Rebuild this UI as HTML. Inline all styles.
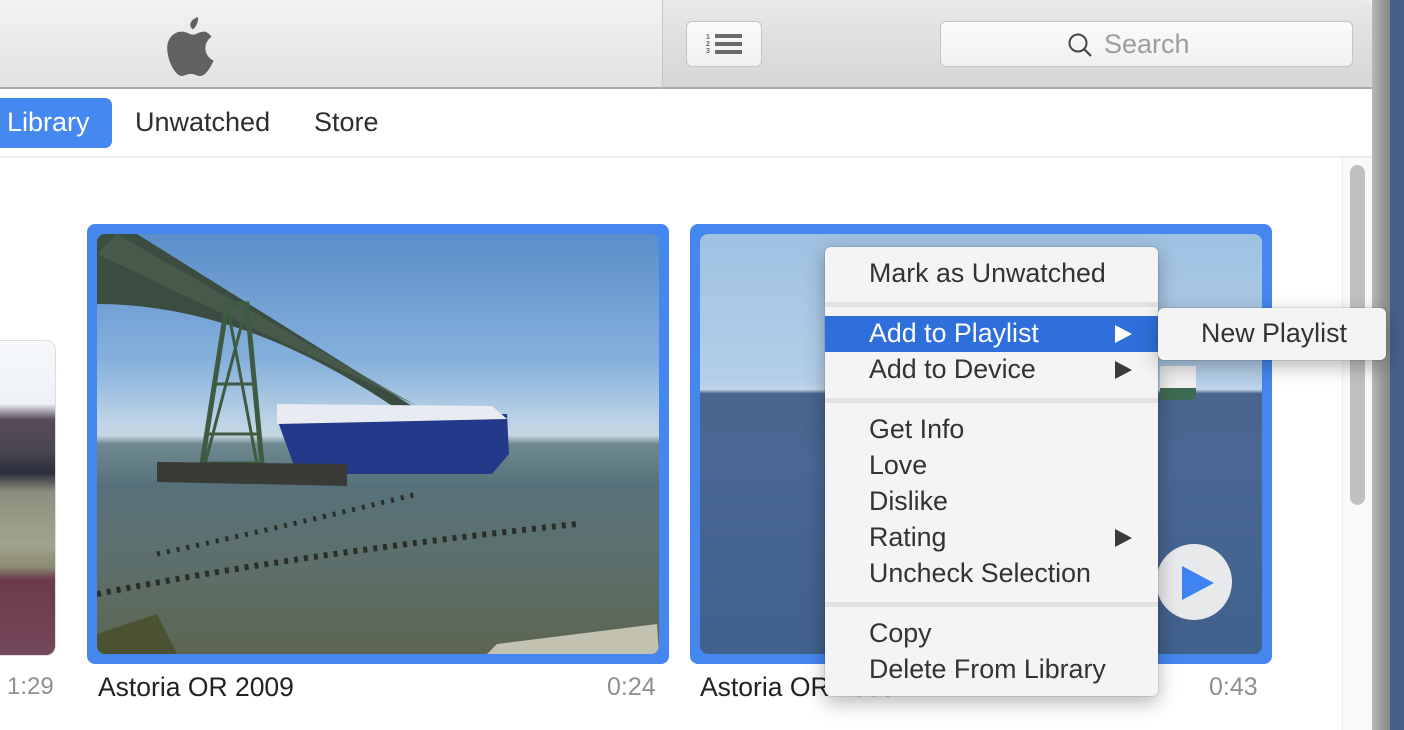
<!DOCTYPE html>
<html><head><meta charset="utf-8"><style>
*{margin:0;padding:0;box-sizing:border-box}
body{width:1404px;height:730px;overflow:hidden;background:#fff;font-family:"Liberation Sans",sans-serif;position:relative}
.abs{position:absolute}
#hdr{left:0;top:0;width:1372px;height:89px;background:linear-gradient(#f2f2f2,#e2e2e2);border-bottom:2px solid #a9a9a9}
#hdr2{left:662px;top:0;width:710px;height:89px;background:linear-gradient(#e8e8e8,#d6d6d6);border-left:1px solid #c8c8c8;border-bottom:2px solid #a9a9a9;border-top-right-radius:8px}
.btn{background:linear-gradient(#fbfbfb,#f0f0f0);border:1px solid #c4c4c4;border-radius:6px}
.tab{font-size:27px;color:#2e2e2e;top:107px}
.menu{background:#f4f4f4;border-radius:6px;box-shadow:0 6px 20px rgba(0,0,0,.3),0 0 0 1px rgba(0,0,0,.08)}
.mi{position:absolute;left:44px;font-size:26.8px;color:#333}
.sep{position:absolute;left:0;width:333px;height:5px;background:#e2e2e2}
.arr{position:absolute;left:290px;width:0;height:0;border-top:9px solid transparent;border-bottom:9px solid transparent;border-left:17px solid #3a3a3a}
</style></head><body>
<div id="hdr" class="abs"></div>
<div id="hdr2" class="abs"></div>
<svg class="abs" style="left:165px;top:13px" width="56" height="64" viewBox="0 0 54 62"><path fill="#616161" d="M27 16c3-3 5-6 5-12-4 1-6 3-7 5-1 2-1 5 2 7zM38 18c-5 0-8 3-11 3s-6-3-11-3C9 18 2 24 2 34c0 12 8 27 14 27 3 0 5-2 9-2s5 2 9 2c5 0 10-8 13-15-5-2-8-7-8-12 0-5 3-9 6-11-3-4-6-5-7-5z"/></svg>
<div class="abs btn" style="left:686px;top:21px;width:76px;height:46px"></div>
<div class="abs" style="left:706px;top:34px;font-size:7px;line-height:7px;color:#666;font-weight:bold">1<br>2<br>3</div>
<div class="abs" style="left:715px;top:34px;width:27px;height:4px;background:#6a6a6a;box-shadow:0 8px 0 #6a6a6a,0 16px 0 #6a6a6a"></div>
<div class="abs btn" style="left:940px;top:21px;width:413px;height:46px"></div>
<svg class="abs" style="left:1067px;top:32px" width="28" height="28"><circle cx="11" cy="11" r="8.5" stroke="#444" stroke-width="2" fill="none"/><path d="M17 17l7 7" stroke="#444" stroke-width="2.2"/></svg>
<div class="abs" style="left:1104px;top:29px;font-size:27px;color:#9d9d9d">Search</div>
<div class="abs" style="left:0;top:98px;width:112px;height:50px;background:#4588f0;border-radius:0 7px 7px 0"></div>
<div class="abs tab" style="left:7px;color:#fff">Library</div>
<div class="abs tab" style="left:135px">Unwatched</div>
<div class="abs tab" style="left:314px">Store</div>
<div class="abs" style="left:0;top:156px;width:1372px;height:2px;background:#ececec"></div>
<div class="abs" style="left:1342px;top:158px;width:30px;height:572px;background:#fafafa;border-left:1px solid #ececec"></div>
<div class="abs" style="left:1350px;top:165px;width:15px;height:340px;background:#c1c1c1;border-radius:8px"></div>
<div class="abs" style="left:1372px;top:0;width:18px;height:730px;background:linear-gradient(90deg,#b8b8b8,#999 60%,#8a8a8a)"></div>
<div class="abs" style="left:1390px;top:0;width:14px;height:730px;background:#46608c"></div>
<div class="abs" style="left:-10px;top:340px;width:66px;height:316px;border-radius:10px;overflow:hidden;background:linear-gradient(#f6f8fb 0%,#eef2f7 20%,#5a4a5a 25%,#4a4650 35%,#2b2e3c 42%,#8d8e7e 48%,#a3a48f 65%,#8b8a72 72%,#6b3a4a 76%,#74475a 100%);border:1px solid #ddd"></div>
<div class="abs" style="left:7px;top:673px;font-size:24px;color:#8f8f8f">1:29</div>
<div class="abs" style="left:87px;top:224px;width:582px;height:440px;background:#4587ef;border-radius:8px"></div>
<div class="abs" style="left:97px;top:234px;width:562px;height:420px;border-radius:8px;overflow:hidden;background:linear-gradient(#5b8ec9 0%,#85b0dc 30%,#bdd4e6 45%,#c7d6e0 48%,#6f8990 50%,#57717a 60%,#5d6f6a 80%,#5c6550 100%)">
<svg width="562" height="420" style="position:absolute;left:0;top:0">
<path d="M0 0 L40 0 L320 175 L310 182 Q150 70 0 70Z" fill="#3b4d40"/>
<path d="M0 20 L20 0 L320 172Z" fill="#4b5e4f" opacity=".7"/>
<path d="M130 70 L150 70 L165 230 L105 230Z" fill="none" stroke="#3e5a40" stroke-width="5"/>
<path d="M118 150 L160 150 M110 200 L163 200 M130 70 L160 230 M150 70 L108 230" stroke="#3e5a40" stroke-width="3"/>
<path d="M180 185 L410 180 L412 220 L395 240 L200 240Z" fill="#233a8a"/>
<path d="M180 170 L395 172 L410 185 L180 190Z" fill="#e8ecf2"/>
<path d="M60 228 L250 230 L250 252 L60 248Z" fill="#3a3a36"/>
<path d="M0 360 Q200 320 480 290" stroke="#2b2d27" stroke-width="6" fill="none" stroke-dasharray="4 6"/>
<path d="M60 320 Q200 290 320 260" stroke="#2b2d27" stroke-width="5" fill="none" stroke-dasharray="3 7"/>
<path d="M0 400 L60 380 L80 420 L0 420Z" fill="#4b5232"/>
<path d="M400 410 L560 390 L562 420 L390 420Z" fill="#c3c1b0"/>
</svg></div>
<div class="abs" style="left:98px;top:672px;font-size:26.5px;color:#222">Astoria OR 2009</div>
<div class="abs" style="left:607px;top:673px;font-size:25px;color:#8f8f8f">0:24</div>
<div class="abs" style="left:690px;top:224px;width:582px;height:440px;background:#4587ef;border-radius:8px"></div>
<div class="abs" style="left:700px;top:234px;width:562px;height:420px;border-radius:8px;overflow:hidden;background:linear-gradient(#9fc1e2 0%,#b3cfe8 35%,#c2d6ea 37%,#49648d 38%,#4a6794 55%,#41608c 100%)">
<div class="abs" style="left:460px;top:132px;width:36px;height:34px;background:linear-gradient(#f0f0f0 65%,#3d6a52 65%);border-radius:0 0 6px 2px"></div>
<div class="abs" style="left:456px;top:310px;width:76px;height:76px;border-radius:50%;background:#e8e9ea"></div>
<div class="abs" style="left:482px;top:332px;width:0;height:0;border-top:17px solid transparent;border-bottom:17px solid transparent;border-left:32px solid #3d84f2"></div>
</div>
<div class="abs" style="left:700px;top:672px;font-size:26.5px;color:#222">Astoria OR 2009</div>
<div class="abs" style="left:1209px;top:673px;font-size:25px;color:#8f8f8f">0:43</div>
<div class="abs menu" style="left:825px;top:247px;width:333px;height:449px">
<div class="mi" style="top:11px">Mark as Unwatched</div>
<div class="sep" style="top:55px"></div>
<div class="abs" style="left:0;top:69px;width:333px;height:36px;background:#2f6fdc"></div>
<div class="mi" style="top:71px;color:#fff">Add to Playlist</div>
<div class="arr" style="top:78px;border-left-color:#fff"></div>
<div class="mi" style="top:107px">Add to Device</div>
<div class="arr" style="top:114px"></div>
<div class="sep" style="top:151px"></div>
<div class="mi" style="top:167px">Get Info</div>
<div class="mi" style="top:203px">Love</div>
<div class="mi" style="top:239px">Dislike</div>
<div class="mi" style="top:275px">Rating</div>
<div class="arr" style="top:282px"></div>
<div class="mi" style="top:311px">Uncheck Selection</div>
<div class="sep" style="top:355px"></div>
<div class="mi" style="top:371px">Copy</div>
<div class="mi" style="top:407px">Delete From Library</div>
</div>
<div class="abs menu" style="left:1158px;top:308px;width:228px;height:52px">
<div class="mi" style="left:43px;top:10px">New Playlist</div>
</div>
</body></html>
